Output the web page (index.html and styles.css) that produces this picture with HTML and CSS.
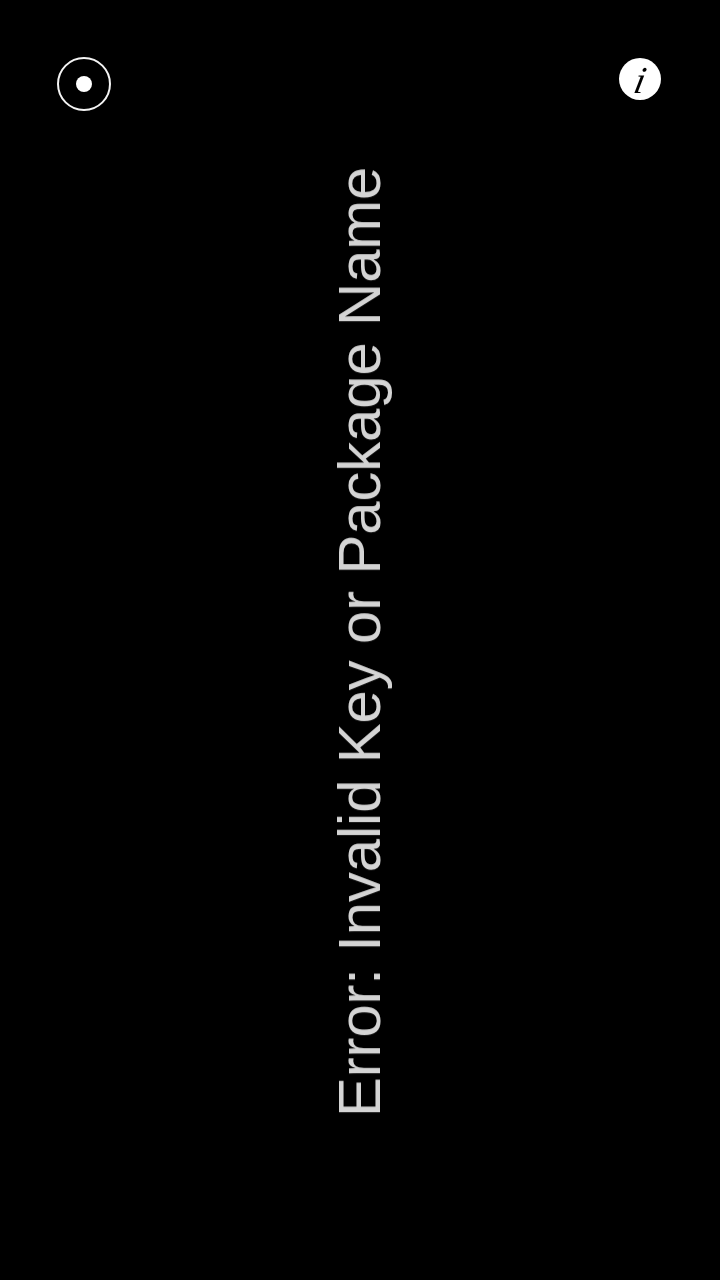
FILE: index.html
```html
<!DOCTYPE html>
<html>
<head>
<meta charset="utf-8">
<title>Error</title>
<link rel="stylesheet" href="styles.css">
</head>
<body>
<main class="screen">
  <div class="icon-record"><span class="record-dot"></span></div>
  <div class="icon-info"><span class="info-glyph">i</span></div>
  <div class="message">Error: Invalid Key or Package Name</div>
</main>
</body>
</html>
```
FILE: styles.css
```css
html, body { margin: 0; padding: 0; background: #000; }
.screen { position: relative; width: 720px; height: 1280px; overflow: hidden; background: #000; }
.icon-record { position: absolute; left: 57px; top: 57px; width: 54px; height: 54px; box-sizing: border-box; border: 2.5px solid #f4f4f4; border-radius: 50%; display: flex; align-items: center; justify-content: center; filter: blur(0.4px); }
.record-dot { width: 16px; height: 16px; border-radius: 50%; background: #fff; }
.icon-info { position: absolute; left: 619px; top: 58px; width: 42px; height: 42px; border-radius: 50%; background: #fff; color: #000; font: italic 38px/44px "Liberation Serif", serif; text-align: center; filter: blur(0.4px); }
.info-glyph { display: inline-block; transform: skewX(-12deg); }
.message { position: absolute; left: 360px; top: 641.5px; transform: translate(-50%, -50%) rotate(-90deg); white-space: nowrap; color: #d4d4d4; font: 60px/1 "Liberation Sans", sans-serif; letter-spacing: -0.2px; filter: blur(0.6px); }
```
